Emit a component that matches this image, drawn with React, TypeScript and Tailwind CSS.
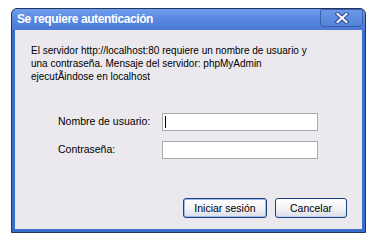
import React from "react";

const font = "font-['Tahoma','Liberation_Sans','DejaVu_Sans',sans-serif]";

function CloseGlyph() {
  return (
    <svg width="16" height="12" viewBox="0 0 16 12">
      <path d="M3.5 2 L12.5 10 M12.5 2 L3.5 10" stroke="#2a4a94" strokeWidth={4} strokeLinecap="square" fill="none" />
      <path d="M3.5 2 L12.5 10 M12.5 2 L3.5 10" stroke="#ffffff" strokeWidth={2} strokeLinecap="square" fill="none" />
    </svg>
  );
}

function XpButton({ label, isDefault }: { label: string; isDefault?: boolean }) {
  return (
    <button
      className={`h-[20px] rounded-[3px] border border-[#1c3f80] bg-gradient-to-b from-[#ffffff] via-[#f4f4f6] to-[#d8dde8] text-[10.5px] text-black leading-none flex items-center justify-center ${
        isDefault ? "w-[84px] shadow-[inset_0_0_0_1px_#9dbcec]" : "w-[72px] shadow-[inset_0_-1px_0_#c3d2ee]"
      }`}
    >
      {label}
    </button>
  );
}

export default function App() {
  return (
    <div className={`w-[378px] h-[251px] bg-white pl-[11px] pt-[8px] ${font}`}>
      <div className="w-[355px] h-[225px] rounded-t-[6px] border border-[#22355f] bg-[#3b6dcb] flex flex-col">
        {/* title bar */}
        <div className="h-[21px] flex items-start justify-between rounded-t-[5px] bg-gradient-to-b from-[#709ded] via-[#5887e0] to-[#4a79d6]">
          <span className="pl-[5px] pt-[2px] text-[12px] font-bold text-white leading-[17px] tracking-[-0.4px] font-['Liberation_Sans',sans-serif]">
            Se requiere autenticación
          </span>
          <div className="mr-[2px] h-[18px] w-[43px] rounded-b-[4px] rounded-t-[2px] border border-[#3a5ea8] bg-gradient-to-b from-[#6a97e6] to-[#5282da] flex items-center justify-center">
            <CloseGlyph />
          </div>
        </div>

        {/* body */}
        <div className="mx-[3px] mb-[3px] flex-1 bg-[#ebe9ed] flex flex-col text-[10.5px] text-black">
          <p className="pt-[14px] pl-[16px] leading-[13px] text-[10px]">
            El servidor http://localhost:80 requiere un nombre de usuario y
            <br />
            una contraseña. Mensaje del servidor: phpMyAdmin
            <br />
            ejecutÃindose en localhost
          </p>

          <div className="mt-[30px] pl-[43px] flex flex-col gap-[10px]">
            <div className="flex items-center">
              <span className="w-[104px]">Nombre de usuario:</span>
              <div className="relative h-[18px] w-[156px] border border-[#a7a9ad] bg-white">
                <span className="absolute left-[2px] top-[2px] h-[12px] w-px bg-black" />
              </div>
            </div>
            <div className="flex items-center">
              <span className="w-[104px]">Contraseña:</span>
              <div className="h-[18px] w-[156px] border border-[#a7a9ad] bg-white" />
            </div>
          </div>

          <div className="mt-auto mb-[11px] mr-[15px] flex justify-end gap-[8px]">
            <XpButton label="Iniciar sesión" isDefault />
            <XpButton label="Cancelar" />
          </div>
        </div>
      </div>
    </div>
  );
}
